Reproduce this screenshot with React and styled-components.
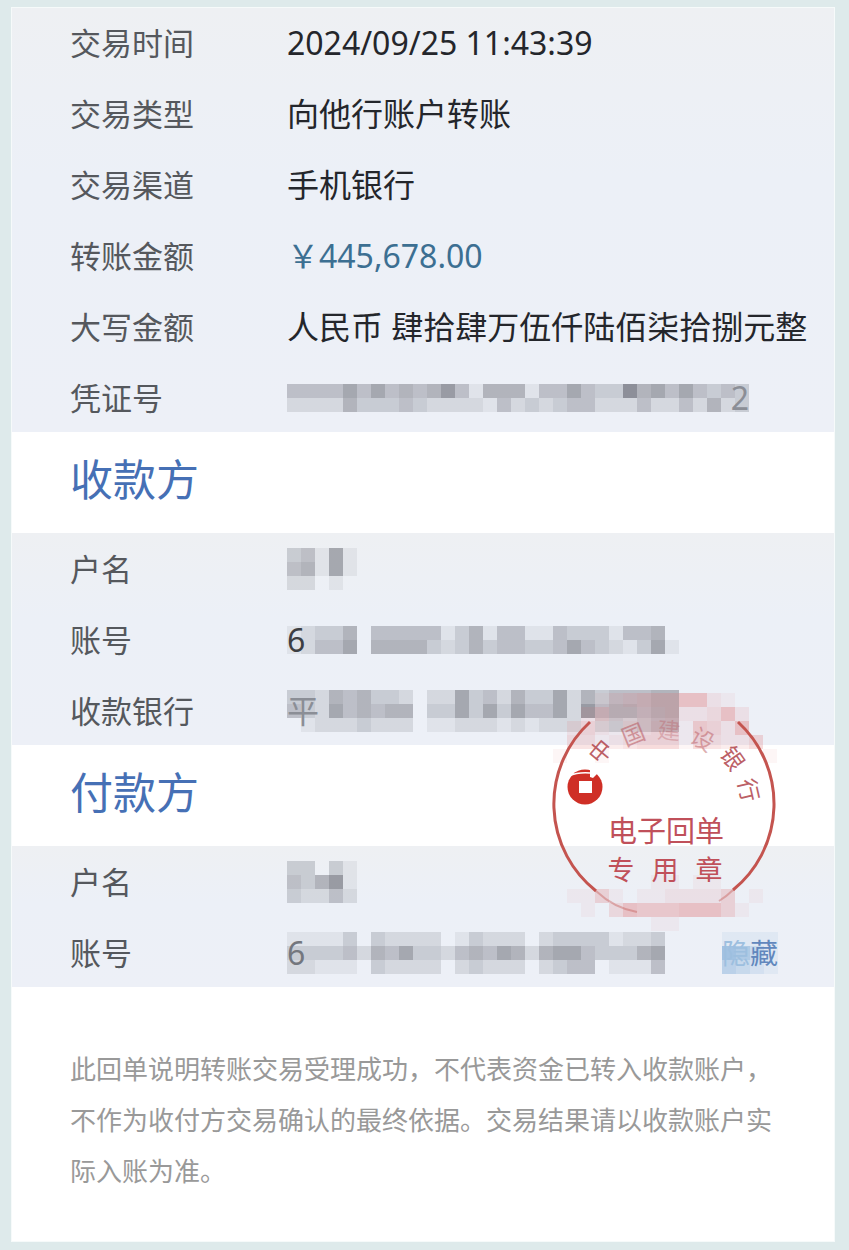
import React from "react";
import styled, { createGlobalStyle } from "styled-components";

const GlobalStyle = createGlobalStyle`
  * {
    box-sizing: border-box;
  }
  body {
    margin: 0;
    background-color: #deeaeb;
    font-family: "Noto Sans", "Noto Sans CJK SC", sans-serif;
  }
`;

const ReceiptPageStyles = styled.main`
  min-height: 100vh;
  padding: 7px 14px 8px 11px;
`;

const Card = styled.article`
  border: 1px solid #f6fafa;
  background-color: #fff;
`;

const DetailBlock = styled.dl`
  display: flex;
  flex-direction: column;
  gap: 29px;
  margin: 0;
  padding: ${(props) => props.$top || 15}px 30px 13px 58px;
  background: linear-gradient(#eef0f3, #ecf0f7 40%, #edf0f7);
`;

const Row = styled.div`
  display: grid;
  grid-template-columns: 217px 1fr;
  grid-template-rows: 42px;
  align-items: center;
  font-size: 32px;
  line-height: 42px;
  white-space: nowrap;
`;

const Label = styled.dt`
  color: #55585d;
  font-size: 31px;
`;

const Value = styled.dd`
  display: flex;
  align-items: center;
  justify-content: space-between;
  height: 42px;
  margin: 0;
  color: ${(props) => (props.$accent ? "#3c6f92" : "#24262b")};
`;

const SectionHeader = styled.header`
  position: relative;
  display: flex;
  align-items: center;
  height: 101px;
  padding: 0 58px 6px;
`;

const SectionTitle = styled.h2`
  margin: 0;
  color: #4670b5;
  font-size: 43px;
  font-weight: 400;
  line-height: 60px;
`;

const MaskedStyles = styled.span`
  display: inline-grid;
  grid-template-rows: 42px;
  align-items: center;
  > * {
    grid-area: 1 / 1;
  }
`;

const Cells = styled.span`
  display: grid;
  grid-template-columns: repeat(${(props) => props.$cols}, 14px);
  grid-auto-rows: 14px;
`;

const Cell = styled.span`
  background-color: rgba(
    ${(props) => props.$tint},
    ${(props) => props.$level * 0.085}
  );
`;

const Hint = styled.span`
  justify-self: ${(props) => (props.$end ? "end" : "start")};
  color: ${(props) => props.$color};
`;

const HideButton = styled.button`
  display: flex;
  height: 42px;
  margin-right: 26px;
  padding: 0;
  border: 0;
  background: none;
  color: #6187bd;
  font: inherit;
  font-size: 28px;
  line-height: 42px;
  cursor: pointer;
`;

const Faded = styled.span`
  color: #9dbfdf;
`;

const Note = styled.p`
  margin: 0;
  padding: 57px 56px 44px 58px;
  color: #999;
  font-size: 26px;
  line-height: 51px;
`;

const SealStyles = styled.svg`
  position: absolute;
  top: -66px;
  right: 43px;
  z-index: 1;
  pointer-events: none;
`;

// one digit per 14px cell, 0 is clear and 9 is the darkest
const masks = {
  voucher: [
    "444464645457415551446433856464343",
    "222253334322221423234422242242523",
  ],
  payeeName: ["34161", "45161", "22010"],
  payeeAccount: [
    "1233504444413514411433314450",
    "1244605555323534433464321361",
  ],
  payeeBank: [
    "3325453320226342533625344455",
    "4326454550336363644627455455",
    "0122232220112221212220232344",
  ],
  payerName: ["33031", "43571", "32242"],
  payerAccount: [
    "1111303222201322202333312230",
    "3333425463324546525664333560",
    "2211103222202322202344011140",
  ],
  hide: ["1111", "6531", "4321"],
};

const sealMask = [
  "000000000000000000",
  "000012344466210000",
  "000242233422362000",
  "002421334415426000",
  "003312344414322400",
  "010010000000000010",
  "000000000000000000",
  "000000000000000000",
  "000000000000000000",
  "000000000000000000",
  "000000000000000000",
  "000000000000000000",
  "000000000000000000",
  "000000000000000000",
  "000000001101100000",
  "001141011222240100",
  "000103655566641000",
  "000000001100000000",
];

const arcChars = [
  { char: "中", x: 61, y: 72, turn: -50, opacity: 0.9 },
  { char: "国", x: 94, y: 55, turn: -22, opacity: 0.5 },
  { char: "建", x: 130, y: 51, turn: 5, opacity: 0.3 },
  { char: "设", x: 164, y: 60, turn: 30, opacity: 0.45 },
  { char: "银", x: 194, y: 79, turn: 55, opacity: 0.9 },
  { char: "行", x: 210, y: 111, turn: 77, opacity: 0.9 },
];

const Masked = ({ rows, tint = "96, 98, 108", children }) => (
  <MaskedStyles>
    <Cells $cols={rows[0].length} aria-hidden="true">
      {rows.map((row, y) =>
        row
          .split("")
          .map((level, x) => (
            <Cell key={`${y}-${x}`} $level={Number(level)} $tint={tint} />
          ))
      )}
    </Cells>
    {children}
  </MaskedStyles>
);

const Field = ({ label, accent, children }) => (
  <Row>
    <Label>{label}</Label>
    <Value $accent={accent}>{children}</Value>
  </Row>
);

const Seal = () => (
  <SealStyles width="252" height="252" viewBox="0 0 252 252">
    <g fill="#dd6b6b">
      {sealMask.map((row, y) =>
        row
          .split("")
          .map((level, x) =>
            level === "0" ? null : (
              <rect
                key={`${y}-${x}`}
                x={x * 14}
                y={y * 14}
                width="14"
                height="14"
                opacity={Number(level) * 0.06}
              />
            )
          )
      )}
    </g>
    <g fill="none" stroke="#c4544f">
      <path d="M51 43A111 111 0 0 0 57 212" strokeWidth="3" />
      <path d="M57 212Q75 229 98 233" strokeWidth="2" opacity="0.4" />
      <path d="M199 43A111 111 0 0 1 194 211" strokeWidth="3" />
      <path d="M194 211Q188 217 180 222" strokeWidth="2" opacity="0.4" />
    </g>
    <circle cx="46" cy="108" r="17.5" fill="#cf2f26" />
    <rect x="40" y="102" width="13" height="12" fill="#fff" />
    <path d="M51 88v10l3 1 5-5 3-7z" fill="#fff" />
    <path d="M30 97q9-4 21-3" fill="none" stroke="#fff" strokeWidth="1.5" />
    <g
      fill="#b54f56"
      fontSize="23"
      textAnchor="middle"
      dominantBaseline="central"
    >
      {arcChars.map((item) => (
        <text
          key={item.char}
          opacity={item.opacity}
          transform={`translate(${item.x} ${item.y}) rotate(${item.turn})`}
        >
          {item.char}
        </text>
      ))}
    </g>
    <g fill="#c0505a" textAnchor="middle">
      <text x="127" y="163" fontSize="29">
        电子回单
      </text>
      <g fontSize="27">
        <text x="82" y="201">
          专
        </text>
        <text x="126" y="201">
          用
        </text>
        <text x="170" y="201">
          章
        </text>
      </g>
    </g>
  </SealStyles>
);

const App = () => {
  return (
    <ReceiptPageStyles lang="zh-CN">
      <GlobalStyle />
      <Card>
        <DetailBlock $top={14}>
          <Field label="交易时间">2024/09/25 11:43:39</Field>
          <Field label="交易类型">向他行账户转账</Field>
          <Field label="交易渠道">手机银行</Field>
          <Field label="转账金额" accent>
            ￥445,678.00
          </Field>
          <Field label="大写金额">人民币 肆拾肆万伍仟陆佰柒拾捌元整</Field>
          <Field label="凭证号">
            <Masked rows={masks.voucher}>
              <Hint $end $color="#8b8e96">
                2
              </Hint>
            </Masked>
          </Field>
        </DetailBlock>
        <SectionHeader>
          <SectionTitle>收款方</SectionTitle>
        </SectionHeader>
        <DetailBlock>
          <Field label="户名">
            <Masked rows={masks.payeeName} />
          </Field>
          <Field label="账号">
            <Masked rows={masks.payeeAccount}>
              <Hint $color="#3c3e43">6</Hint>
            </Masked>
          </Field>
          <Field label="收款银行">
            <Masked rows={masks.payeeBank}>
              <Hint $color="#8b8e96">平</Hint>
            </Masked>
          </Field>
        </DetailBlock>
        <SectionHeader>
          <SectionTitle>付款方</SectionTitle>
          <Seal />
        </SectionHeader>
        <DetailBlock>
          <Field label="户名">
            <Masked rows={masks.payerName} />
          </Field>
          <Field label="账号">
            <Masked rows={masks.payerAccount}>
              <Hint $color="#74777e">6</Hint>
            </Masked>
            <HideButton type="button">
              <Masked rows={masks.hide} tint="90, 150, 205">
                <span>
                  <Faded>隐</Faded>藏
                </span>
              </Masked>
            </HideButton>
          </Field>
        </DetailBlock>
        <Note>
          此回单说明转账交易受理成功，不代表资金已转入收款账户，不作为收付方交易确认的最终依据。交易结果请以收款账户实际入账为准。
        </Note>
      </Card>
    </ReceiptPageStyles>
  );
};

export default App;
